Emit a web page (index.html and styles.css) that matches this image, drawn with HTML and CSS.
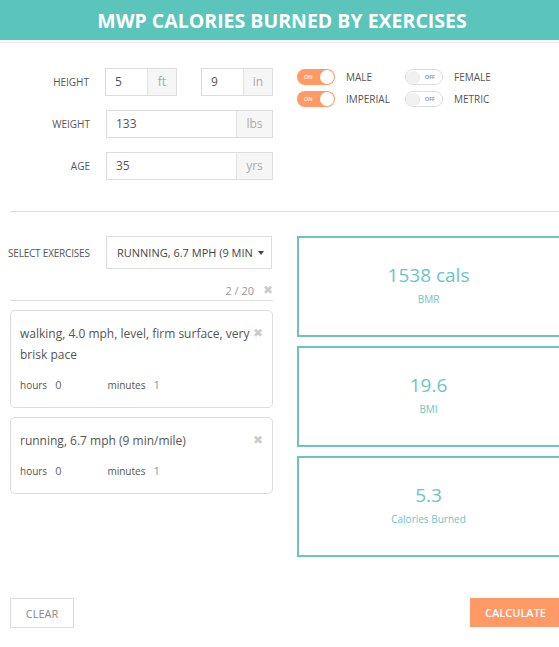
FILE: index.html
```html
<!DOCTYPE html>
<html>
<head>
<meta charset="utf-8">
<link rel="stylesheet" href="styles.css">
</head>
<body>
<div class="page">
  <header class="topbar"><h1>MWP CALORIES BURNED BY EXERCISES</h1></header>
  <div class="faint-rule"></div>

  <section class="profile">
    <div class="fields">
      <div class="field">
        <label class="flabel">HEIGHT</label>
        <div class="pair">
          <div class="ig short"><span class="iv">5</span><span class="ia">ft</span></div>
          <div class="ig short"><span class="iv">9</span><span class="ia">in</span></div>
        </div>
      </div>
      <div class="field">
        <label class="flabel">WEIGHT</label>
        <div class="ig wide"><span class="iv">133</span><span class="ia">lbs</span></div>
      </div>
      <div class="field">
        <label class="flabel">AGE</label>
        <div class="ig wide"><span class="iv">35</span><span class="ia">yrs</span></div>
      </div>
    </div>
    <div class="toggles">
      <div class="trow">
        <div class="opt"><span class="sw on"><span class="st">ON</span><span class="knob"></span></span><span class="ol">MALE</span></div>
        <div class="opt"><span class="sw off"><span class="knob"></span><span class="st">OFF</span></span><span class="ol">FEMALE</span></div>
      </div>
      <div class="trow">
        <div class="opt"><span class="sw on"><span class="st">ON</span><span class="knob"></span></span><span class="ol">IMPERIAL</span></div>
        <div class="opt"><span class="sw off"><span class="knob"></span><span class="st">OFF</span></span><span class="ol">METRIC</span></div>
      </div>
    </div>
  </section>

  <div class="rule"></div>

  <section class="main">
    <div class="left">
      <div class="selrow">
        <label class="sellabel">SELECT EXERCISES</label>
        <div class="select"><span class="seltext">RUNNING, 6.7 MPH (9 MIN</span><span class="caret"></span></div>
      </div>
      <div class="countrow"><span class="count">2 / 20</span><span class="x">&#10006;</span></div>
      <div class="card">
        <div class="chead"><p class="ctitle">walking, 4.0 mph, level, firm surface, very brisk pace</p><span class="x">&#10006;</span></div>
        <div class="cmeta"><span class="mk">hours</span><span class="mv">0</span><span class="mk mk2">minutes</span><span class="mv">1</span></div>
      </div>
      <div class="card">
        <div class="chead"><p class="ctitle">running, 6.7 mph (9 min/mile)</p><span class="x">&#10006;</span></div>
        <div class="cmeta"><span class="mk">hours</span><span class="mv">0</span><span class="mk mk2">minutes</span><span class="mv">1</span></div>
      </div>
    </div>
    <div class="right">
      <div class="res"><div class="rv">1538 cals</div><div class="rl">BMR</div></div>
      <div class="res"><div class="rv">19.6</div><div class="rl">BMI</div></div>
      <div class="res"><div class="rv">5.3</div><div class="rl">Calories Burned</div></div>
    </div>
  </section>

  <footer class="actions">
    <button class="btn clear">CLEAR</button>
    <button class="btn calc">CALCULATE</button>
  </footer>
</div>
</body>
</html>
```

FILE: styles.css
```css
html, body { margin: 0; padding: 0; overflow: hidden; background: #fff; }
body { font-family: "Open Sans", "Liberation Sans", sans-serif; color: #555; }
.page { width: 570px; }

.topbar { background: #5bc4bb; height: 40px; display: flex; align-items: center; justify-content: center; }
.topbar h1 { margin: 0; font-size: 19.5px; font-weight: 700; color: #fff; letter-spacing: 0; padding-right: 6px; }
.faint-rule { height: 1px; background: #ececec; margin: 2px 0 0; }

.profile { display: flex; padding: 25px 0 0 10px; gap: 24px; height: 143px; box-sizing: content-box; }
.fields { width: 263px; display: flex; flex-direction: column; gap: 14px; }
.field { display: flex; align-items: center; height: 28px; }
.flabel { width: 80px; text-align: right; font-size: 10px; color: #555; margin-right: 16px; }
.pair { display: flex; gap: 24px; }
.ig { display: flex; border: 1px solid #ddd; height: 28px; box-sizing: border-box; }
.ig.short { width: 72px; }
.ig.wide { width: 167px; }
.iv { flex: 1; padding-left: 9px; font-size: 12px; line-height: 26px; color: #555; }
.ia { background: #f6f6f6; border-left: 1px solid #e3e3e3; font-size: 12px; color: #aaa; line-height: 26px; text-align: center; }
.ig.short .ia { width: 28px; }
.ig.wide .ia { width: 35px; }

.toggles { display: flex; flex-direction: column; gap: 6px; padding-top: 1px; }
.trow { display: flex; }
.opt { display: flex; align-items: center; width: 108px; }
.sw { width: 38px; height: 16px; border-radius: 8px; box-sizing: border-box; display: flex; align-items: center; justify-content: space-between; font-size: 5.5px; font-weight: 600; }
.sw.on { background: #ff9966; color: #fff; padding: 0 1px 0 7px; }
.sw.off { background: #fff; border: 1px solid #ddd; color: #888; padding: 0 7px 0 0; }
.sw .knob { width: 14px; height: 14px; border-radius: 50%; background: #fff; }
.sw.off .knob { width: 13px; height: 13px; background: #f1f1f1; border-right: 1px solid #e5e5e5; }
.ol { font-size: 10px; color: #555; margin-left: 11px; }

.rule { height: 1px; background: #ddd; margin: 0 0 0 10px; }

.main { display: flex; gap: 24px; padding: 24px 0 0 10px; }
.left { width: 263px; }
.selrow { display: flex; align-items: center; height: 33px; margin-left: -2px; }
.sellabel { width: 98px; font-size: 10px; color: #555; letter-spacing: -0.2px; }
.select { width: 166px; height: 33px; box-sizing: border-box; border: 1px solid #ddd; display: flex; align-items: center; padding: 0 8px 0 10px; overflow: hidden; }
.seltext { font-size: 11px; color: #444; white-space: nowrap; flex: 1; margin-right: 5px; }
.caret { width: 0; height: 0; border-left: 3.5px solid transparent; border-right: 3.5px solid transparent; border-top: 4px solid #444; }
.countrow { display: flex; justify-content: flex-end; align-items: center; gap: 9px; height: 20px; margin-top: 11px; padding-right: 0; border-bottom: 1px solid #ddd; }
.count { font-size: 11px; color: #999; }
.x { color: #ccc; font-size: 12px; line-height: 1; }
.card { border: 1px solid #ddd; border-radius: 5px; padding: 12px 9px 15px 9px; margin-top: 9px; }
.chead { display: flex; justify-content: space-between; align-items: flex-start; }
.ctitle { margin: 0; font-size: 12px; line-height: 21px; color: #555; width: 236px; }
.chead .x { margin-top: 4px; }
.cmeta { display: flex; align-items: center; margin-top: 13px; font-size: 10px; line-height: 14px; }
.mk { color: #555; }
.mv { margin-left: 8px; font-size: 11px; color: #666; }
.mk2 { margin-left: 46px; }
.cmeta .mv:last-child { color: #5ab; }

.right { width: 273px; display: flex; flex-direction: column; gap: 9px; }
.res { height: 101px; box-sizing: border-box; border: 2px solid #6cc5ba; display: flex; flex-direction: column; align-items: center; padding-top: 24px; color: #6cc5c1; padding-right: 10px; }
.rv { font-size: 19px; line-height: 26px; }
.rl { font-size: 10px; margin-top: 4px; }

.actions { display: flex; justify-content: space-between; padding: 41px 0 0 10px; }
.btn { font-family: "Open Sans", "Liberation Sans", sans-serif; font-size: 11px; height: 30px; box-sizing: border-box; cursor: pointer; }
.btn.clear { width: 64px; background: #fff; border: 1px solid #ddd; color: #888; }
.btn.calc { width: 100px; background: #ff9966; border: none; color: #fff; font-weight: 600; padding-right: 15px; height: 29px; }
```
